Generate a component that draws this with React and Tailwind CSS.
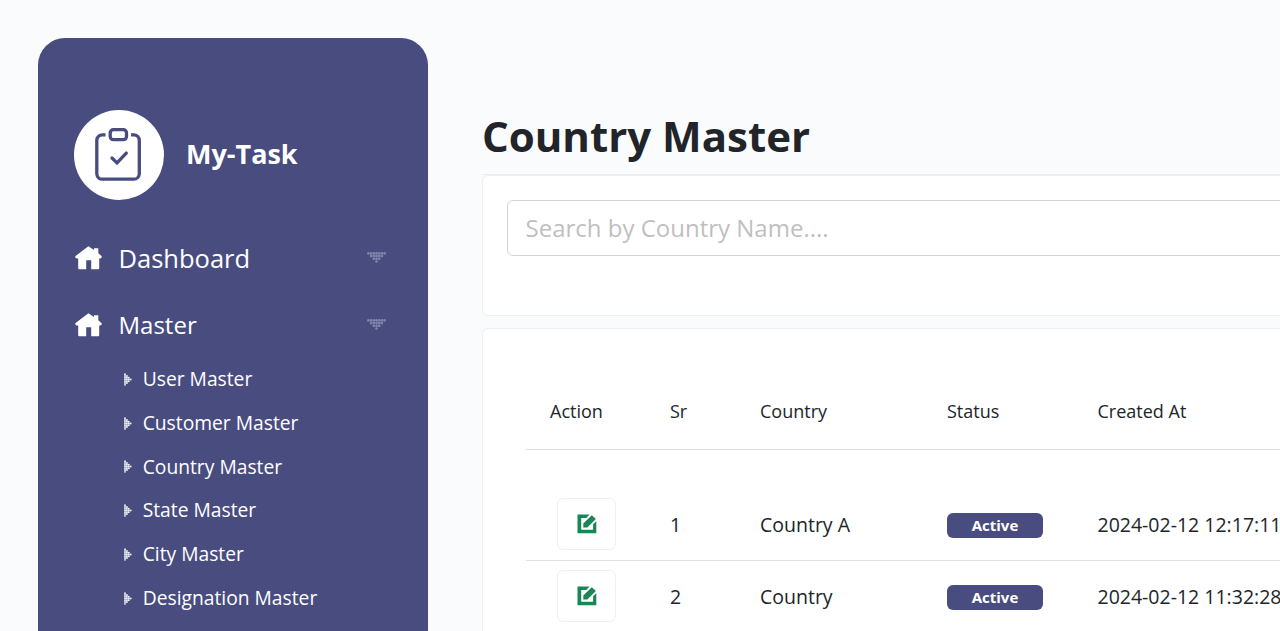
const subItems = ['User Master', 'Customer Master', 'Country Master', 'State Master', 'City Master', 'Designation Master'];

const rows = [
  { sr: 1, country: 'Country A', created: '2024-02-12 12:17:11' },
  { sr: 2, country: 'Country', created: '2024-02-12 11:32:28' },
];

function ClipboardIcon() {
  return (
    <svg viewBox="0 0 46 54" className="h-[54px] w-[46px] text-[#484c7f]" fill="none" stroke="currentColor" strokeWidth="3.3">
      <path d="M10.500 6.800H7.400A5.600 5.600 0 0 0 1.800 12.400V46a5.600 5.600 0 0 0 5.600 5.200H38.800A5.600 5.600 0 0 0 44.300 46V12.400A5.600 5.600 0 0 0 38.800 6.800H36" />
      <rect x="15.200" y="1.700" width="16.300" height="10" rx="3.200" />
      <path d="M17 30l5 4.900 9.300-9.800" strokeLinecap="round" />
    </svg>
  );
}

function HomeIcon() {
  return (
    <svg viewBox="0 0 27 24" className="h-6 w-[27px] shrink-0" fill="#fff">
      <path d="M13.400 0.200L19 4.100V2.300H23.300V7.200L26.700 10.200V11.400L25.300 12.400H24.200V22.300Q24.200 23.300 23.200 23.300H16.200V14.200H11.200V23.300H4.200Q3.200 23.300 3.200 22.300V12.400H1.700L0.300 11.400V10.200Z" />
    </svg>
  );
}

function DownDots() {
  return (
    <svg viewBox="0 0 19 11" className="h-[11px] w-[19px]" fill="#8183aa">
      {[7, 5, 3, 1].map((n, r) =>
        Array.from({ length: n }, (_, i) => (
          <circle key={`${r}-${i}`} cx={9.5 + (i - (n - 1) / 2) * 2.7} cy={1.4 + r * 2.7} r="1.350" />
        ))
      )}
    </svg>
  );
}

function RightDots() {
  return (
    <svg viewBox="0 0 8 13" className="h-[13px] w-2 shrink-0" fill="#f0f0f6">
      {[7, 5, 3, 1].map((n, c) =>
        Array.from({ length: n }, (_, i) => (
          <circle key={`${c}-${i}`} cx={1 + c * 1.9} cy={6.5 + (i - (n - 1) / 2) * 1.78} r="0.950" />
        ))
      )}
    </svg>
  );
}

function EditIcon() {
  return (
    <svg viewBox="0 0 20 20" className="h-5 w-5" fill="#198754">
      <path d="M0.500 0.500H12.500L9.400 3.900H4.200V15.800H16.100V10.300L19.300 7.200V19.300H0.500Z" />
      <path d="M6.300 9.600L14.800 1.200L18.800 5L10.300 13.500H6.300Z" />
    </svg>
  );
}

function MenuItem({ label, size }) {
  return (
    <div className="flex h-[67px] items-center pl-[37px] pr-[42px]">
      <HomeIcon />
      <span className={`ml-[16.500px] flex-1 leading-9 ${size}`}>{label}</span>
      <DownDots />
    </div>
  );
}

const grid = 'grid grid-cols-[120px_90px_187px_150.500px_300px]';

export default function App() {
  return (
    <div className="flex h-[631px] w-[1280px] overflow-hidden bg-[#fafbfd] pl-[38px] font-['Open_Sans',sans-serif] text-[#212529]">
      <aside className="mt-[38px] h-[700px] w-[390px] shrink-0 rounded-t-[27px] bg-[#484c7f] pt-[72px] text-white">
        <div className="flex items-center pl-9">
          <div className="flex h-[90px] w-[90px] items-center justify-center rounded-full bg-white pr-[2px]">
            <ClipboardIcon />
          </div>
          <span className="ml-[22px] pb-0.5 text-[27px] leading-10 font-bold">My-Task</span>
        </div>
        <nav className="pt-6">
          <MenuItem label="Dashboard" size="text-[25.500px]" />
          <MenuItem label="Master" size="text-[24px]" />
          <ul className="-mt-[0.500px] font-medium">
            {subItems.map((s) => (
              <li key={s} className="flex h-[43.800px] items-center pl-[86px] text-[19.250px]">
                <RightDots />
                <span className="ml-[10.700px] whitespace-nowrap">{s}</span>
              </li>
            ))}
          </ul>
        </nav>
      </aside>

      <main className="ml-[54px] w-[850px] shrink-0">
        <h1 className="h-[175px] border-b border-[#ececee] pt-[109px] text-[42px] leading-[54px] font-bold">Country Master</h1>
        <section className="h-[141px] rounded-md border border-[#efeff1] bg-white pt-6 pl-6">
          <input
            className="h-14 w-[820px] rounded-md border border-[#ced4da] px-[17.500px] pb-0.5 text-2xl outline-none placeholder:text-[#bfbfbf]"
            placeholder="Search by Country Name...."
          />
        </section>
        <section className="mt-3 h-[400px] rounded-md border border-[#efeff1] bg-white pt-[45px] pl-[43px]">
          <div className={`${grid} h-[76px] items-center border-b border-[#dfe0e1] text-[18px]`}>
            {['Action', 'Sr', 'Country', 'Status', 'Created At'].map((h) => (
              <div key={h} className="pl-6">{h}</div>
            ))}
          </div>
          <div className="pt-[39px]">
            {rows.map((r) => (
              <div key={r.sr} className={`${grid} h-[72px] items-center border-b border-[#dfe0e1] text-[19.500px] whitespace-nowrap`}>
                <div className="pb-0.5 pl-[31px]">
                  <button className="flex h-[52px] w-[59px] items-center justify-center rounded-md border border-[#f0f0f0] bg-white">
                    <EditIcon />
                  </button>
                </div>
                <div className="pl-6">{r.sr}</div>
                <div className="pl-6">{r.country}</div>
                <div className="pt-0.5 pl-6">
                  <span className="flex h-[25px] w-24 items-center justify-center rounded-md bg-[#484c7f] text-[15px] font-bold text-white">Active</span>
                </div>
                <div className="pl-6">{r.created}</div>
              </div>
            ))}
          </div>
        </section>
      </main>
    </div>
  );
}
